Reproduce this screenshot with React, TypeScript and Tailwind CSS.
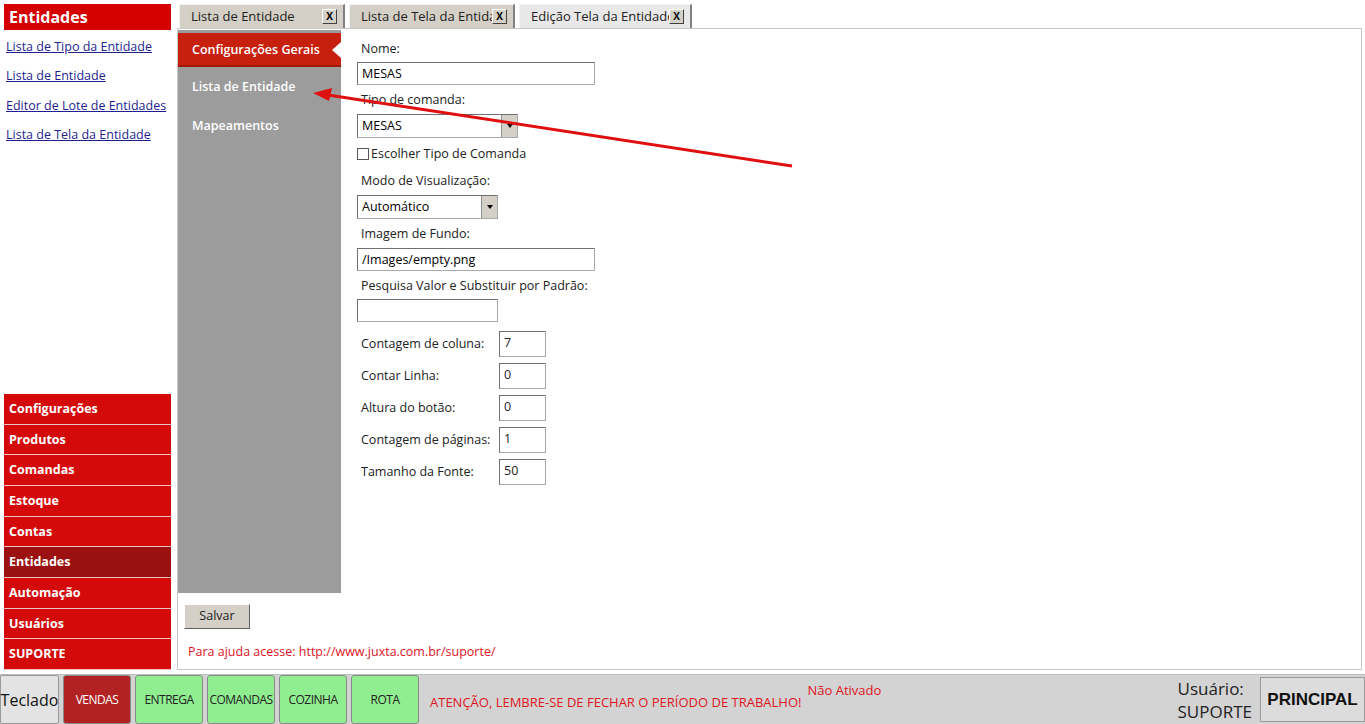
import React from "react";

const font = { fontFamily: '"Open Sans", "Noto Sans", sans-serif' };

const sideLinks = [
  "Lista de Tipo da Entidade",
  "Lista de Entidade",
  "Editor de Lote de Entidades",
  "Lista de Tela da Entidade",
];

const menu = [
  "Configurações",
  "Produtos",
  "Comandas",
  "Estoque",
  "Contas",
  "Entidades",
  "Automação",
  "Usuários",
  "SUPORTE",
];

const tabs = [
  { label: "Lista de Entidade", active: false },
  { label: "Lista de Tela da Entidade", active: false },
  { label: "Edição Tela da Entidade", active: true },
];

const numFields = [
  { label: "Contagem de coluna:", value: "7" },
  { label: "Contar Linha:", value: "0" },
  { label: "Altura do botão:", value: "0" },
  { label: "Contagem de páginas:", value: "1" },
  { label: "Tamanho da Fonte:", value: "50" },
];

function Field({ value, w }: { value: string; w: string }) {
  return (
    <div
      className={`${w} h-[23px] bg-white border border-[#a9a9a9] border-t-[#707070] border-l-[#707070] px-[4px] text-[12.5px] leading-[21px] text-black`}
    >
      {value}
    </div>
  );
}

function Select({ value, w }: { value: string; w: string }) {
  return (
    <div
      className={`${w} h-[24px] bg-white border border-[#a9a9a9] border-t-[#707070] border-l-[#707070] flex items-stretch text-[12.5px] text-black`}
    >
      <div className="flex-1 px-[4px] leading-[22px]">{value}</div>
      <div className="w-[16px] bg-[#d4d0c8] border-l border-[#909090] flex items-center justify-center">
        <div className="w-0 h-0 border-l-[3px] border-r-[3px] border-t-[4px] border-l-transparent border-r-transparent border-t-black" />
      </div>
    </div>
  );
}

function Sidebar() {
  return (
    <div className="w-[167px] ml-[4px] mt-[4px] flex flex-col">
      <div className="h-[26px] bg-[#d40000] text-white font-bold text-[16px] leading-[26px] pl-[5px]">
        Entidades
      </div>
      <div className="flex flex-col pl-[2px] pt-[8px]">
        {sideLinks.map((l) => (
          <div
            key={l}
            className="h-[29.4px] text-[12.5px] text-[#1f1f8f] underline leading-[17px]"
          >
            {l}
          </div>
        ))}
      </div>
      <div className="flex-1" />
      <div className="flex flex-col mb-[4px]">
        {menu.map((m) => (
          <div
            key={m}
            className={`h-[30.7px] border-b border-[#f0c0c0] text-white font-bold text-[12.5px] leading-[30px] pl-[5px] ${
              m === "Entidades" ? "bg-[#9b1010]" : "bg-[#d40a0a]"
            }`}
          >
            {m}
          </div>
        ))}
      </div>
    </div>
  );
}

function Tabs() {
  return (
    <div className="h-[24px] mt-[4px] flex gap-[4px] pl-[2px]">
      {tabs.map((t) => (
        <div
          key={t.label}
          className={`${
            t.active ? "w-[173px] bg-[#e8e8e8]" : "w-[166px] bg-[#d4d0c8]"
          } h-[24px] border-t border-l border-[#f4f4f4] border-r-2 border-r-[#808080] flex items-center pl-[11px] pr-[6px] text-[13px] text-[#222]`}
        >
          <div className="flex-1 whitespace-nowrap overflow-hidden">{t.label}</div>
          <div className="w-[15px] h-[15px] bg-[#d4d0c8] border border-t-white border-l-white border-r-[#404040] border-b-[#404040] text-[10px] font-bold leading-[12px] text-center text-black">
            X
          </div>
        </div>
      ))}
    </div>
  );
}

function Form() {
  return (
    <div className="flex flex-col pl-[16px] pt-[10px] text-[12.5px] text-[#222]">
      <div className="pl-[4px] h-[23px] leading-[20px]">Nome:</div>
      <Field value="MESAS" w="w-[238px]" />
      <div className="pl-[4px] h-[29px] leading-[30px]">Tipo de comanda:</div>
      <Select value="MESAS" w="w-[161px]" />
      <div className="h-[26px] flex items-center gap-[2px] mt-[3px]">
        <div className="w-[12px] h-[12px] border border-[#555] bg-white" />
        <span>Escolher Tipo de Comanda</span>
      </div>
      <div className="pl-[4px] h-[28px] leading-[28px]">Modo de Visualização:</div>
      <Select value="Automático" w="w-[141px]" />
      <div className="pl-[4px] h-[29px] leading-[30px]">Imagem de Fundo:</div>
      <Field value="/Images/empty.png" w="w-[238px]" />
      <div className="pl-[4px] h-[28px] leading-[29px]">Pesquisa Valor e Substituir por Padrão:</div>
      <Field value="" w="w-[141px]" />
      <div className="flex flex-col gap-[6px] mt-[9px]">
        {numFields.map((f) => (
          <div key={f.label} className="flex items-center h-[26px]">
            <div className="w-[142px] pl-[4px]">{f.label}</div>
            <div className="w-[47px] h-[26px] bg-white border border-[#a9a9a9] border-t-[#707070] border-l-[#707070] px-[4px] leading-[22px]">
              {f.value}
            </div>
          </div>
        ))}
      </div>
    </div>
  );
}

function Panel() {
  return (
    <div className="flex-1 mr-[3px] mb-[4px] border border-[#c8c8c8] flex flex-col">
      <div className="flex h-[564px]">
        <div className="w-[163px] bg-[#9c9c9c] mt-[1px] pt-[3px] flex flex-col">
          <div className="relative h-[34px] bg-[#c8200e] border-b-2 border-[#a01808] text-white font-semibold text-[12.5px] leading-[34px] pl-[14px]">
            Configurações Gerais
            <div className="absolute right-0 top-[9px] w-0 h-0 border-t-[8px] border-b-[8px] border-r-[9px] border-t-transparent border-b-transparent border-r-white" />
          </div>
          <div className="h-[39px] text-white font-semibold text-[12.5px] leading-[39px] pl-[14px]">
            Lista de Entidade
          </div>
          <div className="h-[39px] text-white font-semibold text-[12.5px] leading-[39px] pl-[14px]">
            Mapeamentos
          </div>
        </div>
        <Form />
      </div>
      <div className="pl-[6px] pt-[11px]">
        <div className="w-[66px] h-[25px] bg-[#d4d0c8] border border-t-white border-l-white border-r-[#606060] border-b-[#606060] text-[12.5px] text-[#222] leading-[22px] text-center">
          Salvar
        </div>
      </div>
      <div className="pl-[10px] pt-[14px] text-[12.5px] text-[#e0141e]">
        Para ajuda acesse: http://www.juxta.com.br/suporte/
      </div>
    </div>
  );
}

function BottomBar() {
  const greens = ["ENTREGA", "COMANDAS", "COZINHA", "ROTA"];
  return (
    <div className="h-[50px] bg-[#d3d3d3] border-t border-[#bdbdbd] flex items-end">
      <div className="flex items-end gap-[4px] h-full pt-[1px]">
        <div className="w-[59px] h-[49px] bg-[#e3e3e3] border border-[#9a9a9a] rounded-[2px] flex items-center justify-center text-[16px] text-[#111]">
          Teclado
        </div>
        <div className="w-[68px] h-[49px] bg-[#b22222] border border-[#8a8a8a] rounded-[3px] flex items-center justify-center text-[12px] text-white tracking-[-0.5px]">
          VENDAS
        </div>
        {greens.map((g) => (
          <div
            key={g}
            className="w-[68px] h-[49px] bg-[#90ee90] border border-[#8a8a8a] rounded-[3px] flex items-center justify-center text-[12px] text-[#222] tracking-[-0.5px]"
          >
            {g}
          </div>
        ))}
      </div>
      <div className="self-stretch pl-[11px] flex items-start">
        <div className="mt-[18px] text-[13px] text-[#e0141e] whitespace-nowrap">
          ATENÇÃO, LEMBRE-SE DE FECHAR O PERÍODO DE TRABALHO!
        </div>
        <div className="mt-[6px] ml-[6px] text-[13px] text-[#e0141e] whitespace-nowrap">
          Não Ativado
        </div>
      </div>
      <div className="flex-1" />
      <div className="self-stretch flex items-stretch">
        <div className="flex flex-col justify-center text-[17px] leading-[23px] text-[#222] pr-[8px]">
          <div>Usuário:</div>
          <div>SUPORTE</div>
        </div>
        <div
          className="w-[105px] my-[2px] bg-[#dcdcdc] border border-[#9a9a9a] flex items-center justify-center font-bold text-[17px] text-[#111]"
          style={{ fontFamily: '"Liberation Sans", Arial, sans-serif' }}
        >
          PRINCIPAL
        </div>
      </div>
    </div>
  );
}

export default function App() {
  return (
    <div className="relative w-[1365px] h-[724px] bg-white overflow-hidden flex flex-col" style={font}>
      <div className="flex h-[674px]">
        <Sidebar />
        <div className="flex-1 ml-[6px] flex flex-col">
          <Tabs />
          <Panel />
        </div>
      </div>
      <BottomBar />
      {/* anotação: seta vermelha */}
      <svg className="absolute left-0 top-0 pointer-events-none" width="1365" height="724">
        <line x1="792" y1="166" x2="328" y2="95" stroke="#e01010" strokeWidth="3" />
        <polygon points="313,93 332,88 329,101" fill="#e01010" />
      </svg>
    </div>
  );
}
